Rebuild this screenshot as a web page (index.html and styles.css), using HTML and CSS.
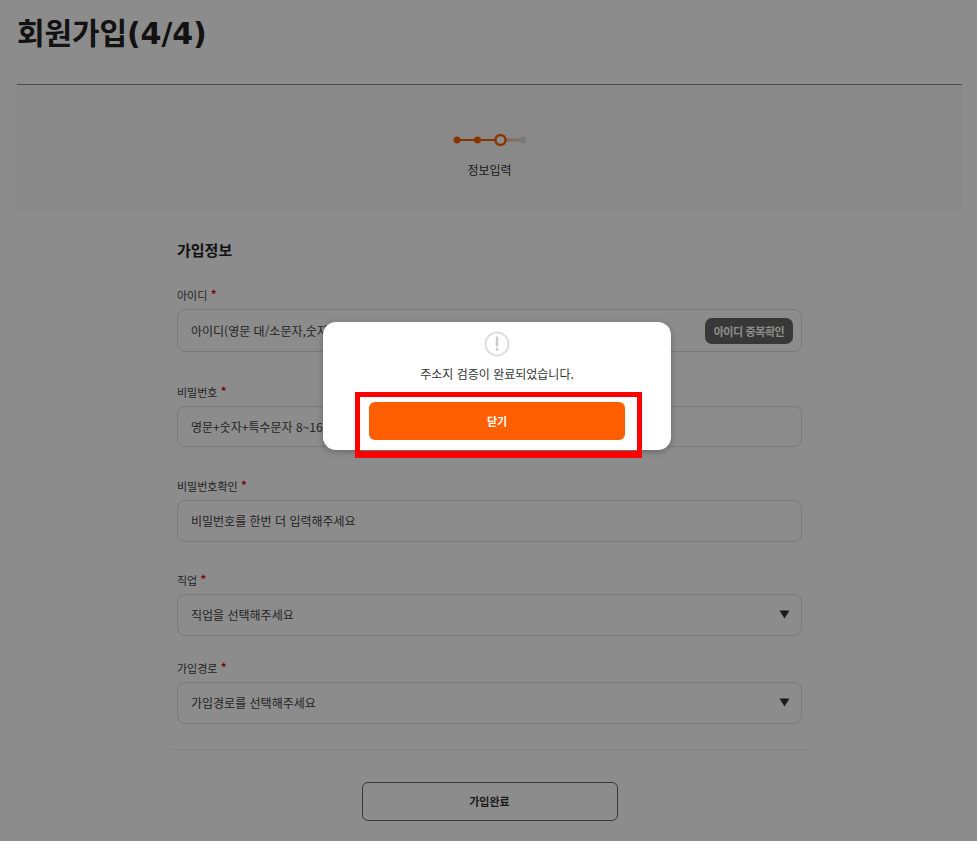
FILE: index.html
```html
<!DOCTYPE html>
<html lang="ko">
<head>
<meta charset="utf-8">
<title>회원가입</title>
<link rel="stylesheet" href="styles.css">
</head>
<body>
<main class="page">
  <h1 class="title">회원가입(4/4)</h1>
  <section class="steps">
    <svg class="stepper" width="76" height="16" viewBox="0 0 76 16">
      <line x1="5" y1="8" x2="48.500" y2="8" stroke="#ff5f00" stroke-width="2"/>
      <line x1="48.500" y1="8" x2="71" y2="8" stroke="#f6c4a8" stroke-width="3"/>
      <circle cx="5" cy="8" r="3.500" fill="#ff5f00"/>
      <circle cx="25.500" cy="8" r="3.500" fill="#ff5f00"/>
      <circle cx="48.500" cy="8" r="5" fill="#fff" stroke="#ff5f00" stroke-width="2.500"/>
      <circle cx="71" cy="8" r="3.500" fill="#ddd"/>
    </svg>
    <p class="step-name">정보입력</p>
  </section>
  <section class="form">
    <h2 class="form-title">가입정보</h2>
    <div class="field field-id">
      <div class="label">아이디 <span class="req">*</span></div>
      <div class="box box-id"><span>아이디(영문 대/소문자,숫자 조합 6~20자)</span><span class="dup">아이디 중복확인</span></div>
    </div>
    <div class="field field-pw">
      <div class="label">비밀번호 <span class="req">*</span></div>
      <div class="box box-pw"><span>영문+숫자+특수문자 8~16자</span></div>
    </div>
    <div class="field field-confirm">
      <div class="label">비밀번호확인 <span class="req">*</span></div>
      <div class="box box-lift"><span>비밀번호를 한번 더 입력해주세요</span></div>
    </div>
    <div class="field field-job">
      <div class="label">직업 <span class="req">*</span></div>
      <div class="box box-lift"><span>직업을 선택해주세요</span>
        <svg class="arrow" width="11" height="9" viewBox="0 0 11 9"><path d="M0.500 0.500H10.500L5.500 8.500Z" fill="#333"/></svg></div>
    </div>
    <div class="field field-path">
      <div class="label">가입경로 <span class="req">*</span></div>
      <div class="box box-lift"><span>가입경로를 선택해주세요</span>
        <svg class="arrow" width="11" height="9" viewBox="0 0 11 9"><path d="M0.500 0.500H10.500L5.500 8.500Z" fill="#333"/></svg></div>
    </div>
  </section>
  <hr class="divider">
  <div class="actions"><button class="submit" type="button">가입완료</button></div>
</main>
<div class="overlay"></div>
<div class="modal">
  <svg class="alert-icon" width="26" height="26" viewBox="0 0 26 26">
    <circle cx="13" cy="13" r="11.500" fill="none" stroke="#ddd" stroke-width="2"/>
    <path d="M13 6.500V14.500" stroke="#ccc" stroke-width="2.400" stroke-linecap="round"/>
    <circle cx="13" cy="18.500" r="1.400" fill="#ccc"/>
  </svg>
  <p class="modal-text">주소지 검증이 완료되었습니다.</p>
  <button class="close" type="button">닫기</button>
</div>
<div class="highlight"></div>
</body>
</html>
```
FILE: styles.css
```css
* { box-sizing: border-box; }
html, body { margin: 0; height: 841px; overflow: hidden; }
body {
  background: #fff;
  color: #222;
  font-family: "Noto Sans CJK KR", "Noto Sans", sans-serif;
  position: relative;
}
.page { padding: 0 15px 0 17px; }
.title {
  margin: 0;
  height: 85px;
  padding-top: 11px;
  font-family: "DejaVu Sans", "Noto Sans CJK KR", sans-serif;
  font-size: 30px;
  line-height: 46px;
  font-weight: 700;
  letter-spacing: -0.1px;
  color: #222;
  border-bottom: 1px solid #888;
}
.steps {
  height: 126px;
  background: #fafafa;
  display: flex;
  flex-direction: column;
  align-items: center;
  padding-top: 47px;
}
.stepper { display: block; }
.step-name { margin: 13px 0 0; font-size: 12px; line-height: 18px; font-weight: 400; color: #333; }
.form { width: 625px; margin: 0 0 0 160px; padding-top: 28px; }
.form-title { margin: 0; font-size: 15px; line-height: 22px; font-weight: 700; color: #222; }
.field-id { margin-top: 26px; }
.field-pw { margin-top: 32px; }
.field-confirm { margin-top: 31px; }
.field-job { margin-top: 30px; }
.field-path { margin-top: 24px; }
.label { font-size: 11px; line-height: 16px; height: 16px; color: #444; font-weight: 400; }
.req { color: #e60000; font-size: 13px; font-weight: 500; }
.box {
  margin-top: 6px;
  height: 42px;
  border: 1px solid #ddd;
  border-radius: 8px;
  padding: 0 13px;
  display: flex;
  align-items: center;
  justify-content: space-between;
  font-size: 12px;
  color: #444;
  background: #fff;
}
.box-id { height: 43px; padding-right: 8px; }
.box-pw { height: 41px; }
.box-lift span { margin-bottom: 2px; }
.dup {
  background: #666;
  color: #fff;
  border-radius: 7px;
  height: 26px;
  width: 88px;
  display: flex;
  align-items: center;
  justify-content: center;
  font-size: 11px;
  font-weight: 700;
  letter-spacing: -0.4px;
}
.arrow { display: block; margin-right: -2px; margin-bottom: 1px; }
.divider { width: 640px; margin: 25px 0 0 153px; border: 0; border-top: 1px solid #eee; }
.actions { display: flex; justify-content: center; padding: 32px 0 0; }
.submit {
  width: 256px;
  height: 39px;
  padding: 0 0 2px;
  background: #fff;
  border: 1px solid #666;
  border-radius: 6px;
  font: 700 11px "Noto Sans CJK KR", sans-serif;
  color: #333;
}
.overlay { position: absolute; inset: 0; background: rgba(0, 0, 0, 0.45); }
.modal {
  position: absolute;
  left: 323px;
  top: 322px;
  width: 348px;
  height: 128px;
  background: #fff;
  border-radius: 13px;
  box-shadow: 0 2px 6px rgba(0, 0, 0, 0.25);
  padding: 9px 46px 0;
  display: flex;
  flex-direction: column;
  align-items: center;
}
.alert-icon { display: block; }
.modal-text { margin: 8px 0 0; font-size: 12px; line-height: 18px; color: #333; font-weight: 400; white-space: nowrap; }
.close {
  margin-top: 19px;
  width: 256px;
  height: 38px;
  flex: none;
  border: 0;
  border-radius: 6px;
  background: #ff5f00;
  color: #fff;
  font: 700 11px "Noto Sans CJK KR", sans-serif;
}
.highlight {
  position: absolute;
  left: 355px;
  top: 392px;
  width: 287px;
  height: 66px;
  border: 5px solid #f00;
  border-bottom-width: 7px;
}
```
